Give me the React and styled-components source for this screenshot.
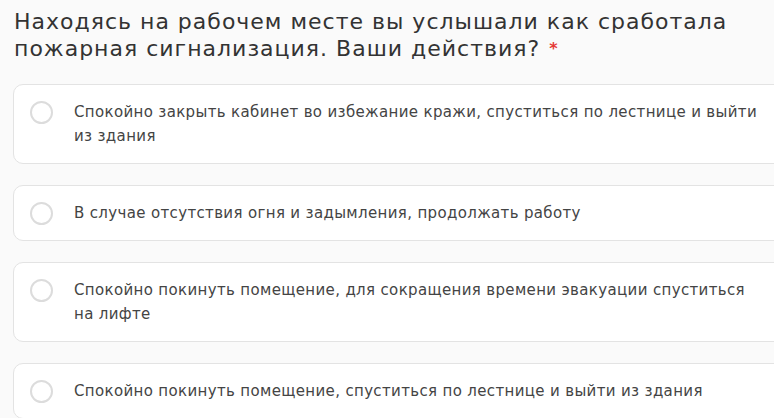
import React, { useState } from 'react';
import styled, { createGlobalStyle } from 'styled-components';

const GlobalStyle = createGlobalStyle`
  body {
    margin: 0;
    background: #fafafa;
    font-family: "DejaVu Sans", "Open Sans", sans-serif;
    overflow: hidden;
  }
`;

const options = [
  'Спокойно закрыть кабинет во избежание кражи, спуститься по лестнице и выйти из здания',
  'В случае отсутствия огня и задымления, продолжать работу',
  'Спокойно покинуть помещение, для сокращения времени эвакуации спуститься на лифте',
  'Спокойно покинуть помещение, спуститься по лестнице и выйти из здания',
];

export default function App() {
  const [selected, setSelected] = useState(null);

  return (
    <Page>
      <GlobalStyle />
      <Question>
        Находясь на рабочем месте вы услышали как сработала пожарная сигнализация. Ваши действия?
        <Required>*</Required>
      </Question>
      <Options>
        {options.map((text, i) => (
          <Option key={i} onClick={() => setSelected(i)}>
            <Radio $checked={selected === i} />
            <Label>{text}</Label>
          </Option>
        ))}
      </Options>
    </Page>
  );
}

const Page = styled.div`
  padding: 8px 0 0 13px;
  width: 790px;
  box-sizing: border-box;
`;

const Question = styled.h2`
  margin: 0 0 22px 1px;
  width: 760px;
  font-size: 22px;
  line-height: 27px;
  font-weight: 400;
  letter-spacing: 1px;
  color: #333;
`;

const Required = styled.span`
  color: #e53935;
  font-size: 16px;
  margin-left: 9px;
  font-weight: 700;
  vertical-align: 2px;
`;

const Options = styled.div`
  display: flex;
  flex-direction: column;
  gap: 21px;
`;

const Option = styled.div`
  display: flex;
  align-items: flex-start;
  gap: 21px;
  padding: 15px 20px 15px 16px;
  background: #fff;
  border: 1px solid #e3e3e3;
  border-radius: 10px;
  cursor: pointer;
`;

const Radio = styled.span`
  flex: none;
  width: 19px;
  height: 19px;
  margin-top: 0.5px;
  border-radius: 50%;
  border: 2px solid ${(p) => (p.$checked ? '#e53935' : '#dcdcdc')};
  box-sizing: content-box;
`;

const Label = styled.div`
  font-size: 15px;
  line-height: 24px;
  letter-spacing: 0.35px;
  color: #444;
`;
